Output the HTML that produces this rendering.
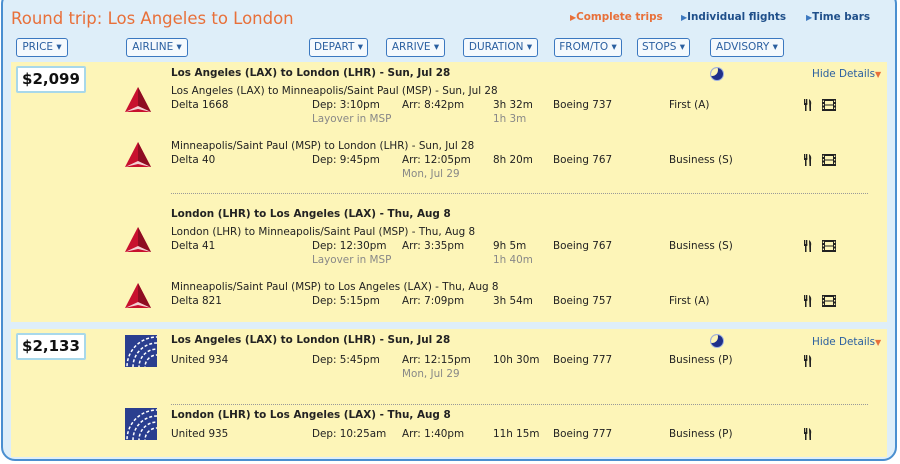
<!DOCTYPE html><html><head><meta charset="utf-8"><style>
*{margin:0;padding:0;box-sizing:border-box}
body{width:900px;height:464px;overflow:hidden;background:#fff;font-family:"DejaVu Sans",Verdana,sans-serif;font-size:10.4px;color:#222;position:relative}
.panel{position:absolute;left:1px;top:-10px;width:896px;height:471px;background:#deeef9;border:2px solid #4a8fd0;border-radius:14px}
.a{position:absolute;white-space:nowrap;line-height:12px}
.b{font-weight:bold}
.g{color:#888}
.card{position:absolute;left:11px;width:876px;background:#fdf5b8}
.btn{position:absolute;top:38px;height:19px;border:1px solid #3b78c0;border-radius:3px;background:#f4f9fd;color:#2a5fa0;font-size:10.5px;line-height:17px;text-align:center}
.price{position:absolute;left:16px;width:70px;height:27px;background:#fff;border:2px solid #a8d8ea;border-radius:2px;font-weight:bold;font-size:15px;text-align:center;line-height:23px;color:#111}
.dot{position:absolute;left:171px;width:697px;border-top:1px dotted #999}
.blue{color:#2a5fa0}
.moon{position:absolute;width:14px;height:14px;border-radius:50%;background:#1f2f8a;overflow:hidden;border:1px solid #9fb0e0}
.moon:after{content:"";position:absolute;left:-5px;top:-4px;width:12px;height:12px;border-radius:50%;background:#fdf5b8}
</style></head><body>
<div class="panel"></div>
<div class="a" style="left:11px;top:10px;font-size:16.5px;line-height:18px;color:#e8703a">Round trip: Los Angeles to London</div>
<div class="a b" style="left:570px;top:11px;color:#e8703a"><span style="font-size:8px">▶</span>Complete trips</div>
<div class="a b" style="left:681px;top:11px;color:#1f4f8a"><span style="font-size:8px;color:#3b78c0">▶</span>Individual flights</div>
<div class="a b" style="left:806px;top:11px;color:#1f4f8a"><span style="font-size:8px;color:#3b78c0">▶</span>Time bars</div>
<div class="btn" style="left:16px;width:52px">PRICE ▾</div>
<div class="btn" style="left:126px;width:62px">AIRLINE ▾</div>
<div class="btn" style="left:309px;width:59px">DEPART ▾</div>
<div class="btn" style="left:386px;width:59px">ARRIVE ▾</div>
<div class="btn" style="left:463px;width:75px">DURATION ▾</div>
<div class="btn" style="left:554px;width:68px">FROM/TO ▾</div>
<div class="btn" style="left:637px;width:53px">STOPS ▾</div>
<div class="btn" style="left:710px;width:74px">ADVISORY ▾</div>

<div class="card" style="top:62px;height:260px"></div>
<div class="card" style="top:329px;height:128px"></div>
<div class="price" style="top:66px">$2,099</div>
<div class="price" style="top:333px">$2,133</div>

<svg width="0" height="0" style="position:absolute"><defs>
<g id="delta"><polygon points="13,0 26,25 0,25" fill="#c8102e"/><polygon points="13,0 26,25 13,19" fill="#8e0c22"/><polygon points="0,25 13,19 26,25 13,22" fill="#f3d0d4"/></g>
<g id="ua"><rect width="32" height="32" fill="#2a3e8f"/><circle cx="32" cy="32" r="30" fill="none" stroke="#fff" stroke-width="1.5" stroke-dasharray="3 2"/><circle cx="32" cy="32" r="24" fill="none" stroke="#fff" stroke-width="1.5" stroke-dasharray="3 2"/><circle cx="32" cy="32" r="18" fill="none" stroke="#fff" stroke-width="1.5" stroke-dasharray="3 2"/><circle cx="32" cy="32" r="12" fill="none" stroke="#fff" stroke-width="1.5" stroke-dasharray="3 2"/></g>
</defs></svg>
<svg class="a" style="left:125px;top:87px" width="26" height="26"><use href="#delta"/></svg>
<svg class="a" style="left:125px;top:142px" width="26" height="26"><use href="#delta"/></svg>
<svg class="a" style="left:125px;top:227px" width="26" height="26"><use href="#delta"/></svg>
<svg class="a" style="left:125px;top:283px" width="26" height="26"><use href="#delta"/></svg>
<svg class="a" style="left:125px;top:335px" width="32" height="32"><use href="#ua"/></svg>
<svg class="a" style="left:125px;top:408px" width="32" height="32"><use href="#ua"/></svg>

<div class="moon" style="left:710px;top:67px"></div>
<div class="moon" style="left:710px;top:334px"></div>
<div class="a blue" style="left:812px;top:68px">Hide Details<span style="color:#e8703a;font-size:8px">▼</span></div>
<div class="a blue" style="left:812px;top:336px">Hide Details<span style="color:#e8703a;font-size:8px">▼</span></div>

<div class="a b" style="left:171px;top:67px">Los Angeles (LAX) to London (LHR) - Sun, Jul 28</div>
<div class="a" style="left:171px;top:85px">Los Angeles (LAX) to Minneapolis/Saint Paul (MSP) - Sun, Jul 28</div>
<div class="a" style="left:171px;top:99px">Delta 1668</div><div class="a" style="left:312px;top:99px">Dep: 3:10pm</div><div class="a" style="left:402px;top:99px">Arr: 8:42pm</div><div class="a" style="left:493px;top:99px">3h 32m</div><div class="a" style="left:553px;top:99px">Boeing 737</div><div class="a" style="left:669px;top:99px">First (A)</div>
<div class="a g" style="left:312px;top:113px">Layover in MSP</div><div class="a g" style="left:493px;top:113px">1h 3m</div>

<div class="a" style="left:171px;top:140px">Minneapolis/Saint Paul (MSP) to London (LHR) - Sun, Jul 28</div>
<div class="a" style="left:171px;top:154px">Delta 40</div><div class="a" style="left:312px;top:154px">Dep: 9:45pm</div><div class="a" style="left:402px;top:154px">Arr: 12:05pm</div><div class="a" style="left:493px;top:154px">8h 20m</div><div class="a" style="left:553px;top:154px">Boeing 767</div><div class="a" style="left:669px;top:154px">Business (S)</div>
<div class="a g" style="left:402px;top:168px">Mon, Jul 29</div>
<div class="dot" style="top:193px"></div>

<div class="a b" style="left:171px;top:208px">London (LHR) to Los Angeles (LAX) - Thu, Aug 8</div>
<div class="a" style="left:171px;top:226px">London (LHR) to Minneapolis/Saint Paul (MSP) - Thu, Aug 8</div>
<div class="a" style="left:171px;top:240px">Delta 41</div><div class="a" style="left:312px;top:240px">Dep: 12:30pm</div><div class="a" style="left:402px;top:240px">Arr: 3:35pm</div><div class="a" style="left:493px;top:240px">9h 5m</div><div class="a" style="left:553px;top:240px">Boeing 767</div><div class="a" style="left:669px;top:240px">Business (S)</div>
<div class="a g" style="left:312px;top:254px">Layover in MSP</div><div class="a g" style="left:493px;top:254px">1h 40m</div>

<div class="a" style="left:171px;top:281px">Minneapolis/Saint Paul (MSP) to Los Angeles (LAX) - Thu, Aug 8</div>
<div class="a" style="left:171px;top:295px">Delta 821</div><div class="a" style="left:312px;top:295px">Dep: 5:15pm</div><div class="a" style="left:402px;top:295px">Arr: 7:09pm</div><div class="a" style="left:493px;top:295px">3h 54m</div><div class="a" style="left:553px;top:295px">Boeing 757</div><div class="a" style="left:669px;top:295px">First (A)</div>

<div class="a b" style="left:171px;top:334px">Los Angeles (LAX) to London (LHR) - Sun, Jul 28</div>
<div class="a" style="left:171px;top:354px">United 934</div><div class="a" style="left:312px;top:354px">Dep: 5:45pm</div><div class="a" style="left:402px;top:354px">Arr: 12:15pm</div><div class="a" style="left:493px;top:354px">10h 30m</div><div class="a" style="left:553px;top:354px">Boeing 777</div><div class="a" style="left:669px;top:354px">Business (P)</div>
<div class="a g" style="left:402px;top:368px">Mon, Jul 29</div>
<div class="dot" style="top:404px"></div>
<div class="a b" style="left:171px;top:409px">London (LHR) to Los Angeles (LAX) - Thu, Aug 8</div>
<div class="a" style="left:171px;top:428px">United 935</div><div class="a" style="left:312px;top:428px">Dep: 10:25am</div><div class="a" style="left:402px;top:428px">Arr: 1:40pm</div><div class="a" style="left:493px;top:428px">11h 15m</div><div class="a" style="left:553px;top:428px">Boeing 777</div><div class="a" style="left:669px;top:428px">Business (P)</div>

<svg width="0" height="0" style="position:absolute"><defs>
<g id="meal"><rect x="0" y="0" width="1.3" height="5" fill="#222"/><rect x="2" y="0" width="1.3" height="5" fill="#222"/><rect x="0" y="4" width="3.3" height="2" fill="#222"/><rect x="1" y="5" width="1.5" height="7" fill="#222"/><path d="M5 0 Q8 2 7 6 L7 12 L5.5 12 Z" fill="#222"/></g>
<g id="film"><rect x="0" y="0" width="14" height="12" fill="#222"/><rect x="3" y="2" width="8" height="3.5" fill="#fdf5b8"/><rect x="3" y="6.5" width="8" height="3.5" fill="#fdf5b8"/><rect x="0.8" y="1.5" width="1.2" height="1.5" fill="#fdf5b8"/><rect x="0.8" y="5" width="1.2" height="1.5" fill="#fdf5b8"/><rect x="0.8" y="8.5" width="1.2" height="1.5" fill="#fdf5b8"/><rect x="12" y="1.5" width="1.2" height="1.5" fill="#fdf5b8"/><rect x="12" y="5" width="1.2" height="1.5" fill="#fdf5b8"/><rect x="12" y="8.5" width="1.2" height="1.5" fill="#fdf5b8"/></g>
</defs></svg>
<svg class="a" style="left:804px;top:99px" width="9" height="13"><use href="#meal"/></svg><svg class="a" style="left:822px;top:99px" width="15" height="13"><use href="#film"/></svg>
<svg class="a" style="left:804px;top:154px" width="9" height="13"><use href="#meal"/></svg><svg class="a" style="left:822px;top:154px" width="15" height="13"><use href="#film"/></svg>
<svg class="a" style="left:804px;top:240px" width="9" height="13"><use href="#meal"/></svg><svg class="a" style="left:822px;top:240px" width="15" height="13"><use href="#film"/></svg>
<svg class="a" style="left:804px;top:295px" width="9" height="13"><use href="#meal"/></svg><svg class="a" style="left:822px;top:295px" width="15" height="13"><use href="#film"/></svg>
<svg class="a" style="left:804px;top:355px" width="9" height="13"><use href="#meal"/></svg>
<svg class="a" style="left:804px;top:428px" width="9" height="13"><use href="#meal"/></svg>
</body></html>
